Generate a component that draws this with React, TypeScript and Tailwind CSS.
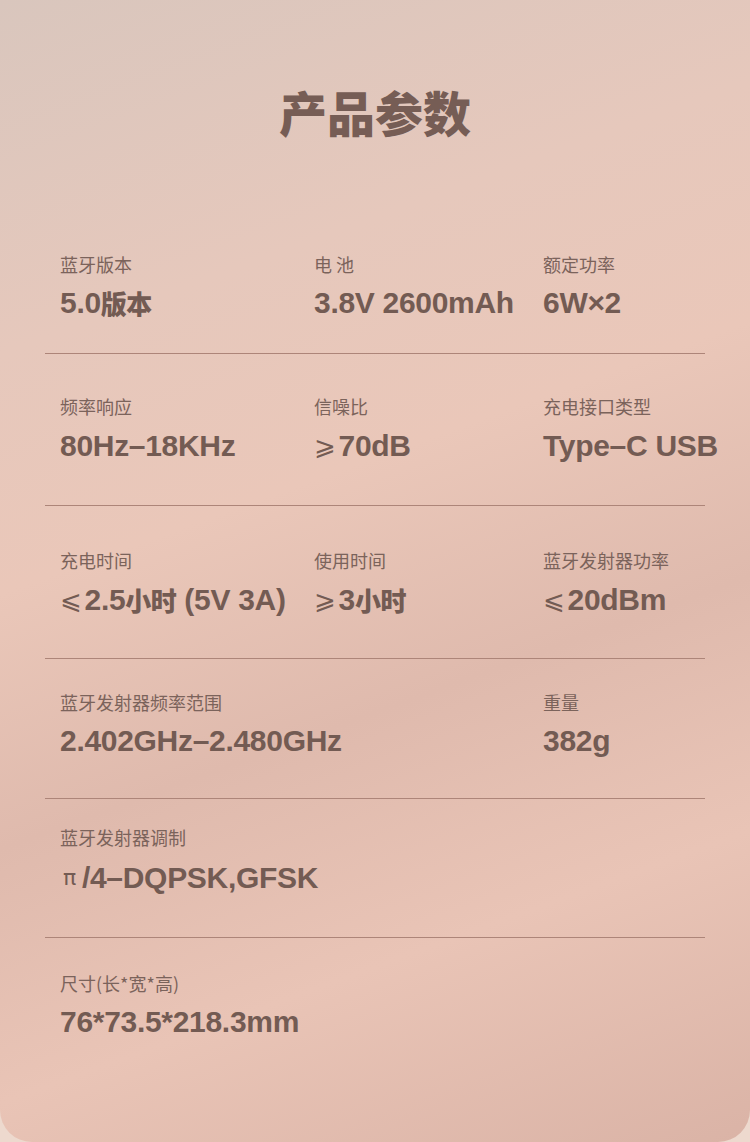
import React from "react";

type Cell = { label: string; value: React.ReactNode };

const Ge = () => (
  <span className="font-['DejaVu_Sans','Noto_Sans_CJK_SC',sans-serif] font-normal text-[26px] mr-[3px]">⩾</span>
);
const Le = () => (
  <span className="font-['DejaVu_Sans','Noto_Sans_CJK_SC',sans-serif] font-normal text-[26px] mr-[3px]">⩽</span>
);
const Zh = ({ children }: { children: React.ReactNode }) => (
  <span className="font-['Noto_Sans_CJK_SC',sans-serif] text-[26px] font-black tracking-[-0.5px]">{children}</span>
);

const rows: { cells: Cell[]; cls: string; gap: string; divider: boolean }[] = [
  {
    cls: "pt-[120px] pb-[35px]",
    gap: "mt-[15px]",
    divider: true,
    cells: [
      { label: "蓝牙版本", value: (<>5.0<Zh>版本</Zh></>) },
      { label: "电 池", value: "3.8V 2600mAh" },
      { label: "额定功率", value: "6W×2" },
    ],
  },
  {
    cls: "pt-[43px] pb-[44px]",
    gap: "mt-[16px]",
    divider: true,
    cells: [
      { label: "频率响应", value: "80Hz–18KHz" },
      { label: "信噪比", value: (<><Ge />70dB</>) },
      { label: "充电接口类型", value: "Type–C USB" },
    ],
  },
  {
    cls: "pt-[45px] pb-[43px]",
    gap: "mt-[16px]",
    divider: true,
    cells: [
      { label: "充电时间", value: (<><Le />2.5<Zh>小时</Zh>&nbsp;(5V 3A)</>) },
      { label: "使用时间", value: (<><Ge />3<Zh>小时</Zh></>) },
      { label: "蓝牙发射器功率", value: (<><Le />20dBm</>) },
    ],
  },
  {
    cls: "pt-[34px] pb-[42px]",
    gap: "mt-[15px]",
    divider: true,
    cells: [
      { label: "蓝牙发射器频率范围", value: "2.402GHz–2.480GHz" },
      { label: "", value: "" },
      { label: "重量", value: "382g" },
    ],
  },
  {
    cls: "pt-[29px] pb-[44px]",
    gap: "mt-[17px]",
    divider: true,
    cells: [
      {
        label: "蓝牙发射器调制",
        value: (
          <>
            <span className="font-['DejaVu_Sans',sans-serif] font-normal text-[22px] ml-[3px] mr-[6px]">π</span>/4–DQPSK,GFSK
          </>
        ),
      },
    ],
  },
  {
    cls: "pt-[36px] pb-[0px]",
    gap: "mt-[15px]",
    divider: false,
    cells: [{ label: "尺寸(长*宽*高)", value: "76*73.5*218.3mm" }],
  },
];

export default function App() {
  return (
    <div className="w-[750px] h-[1142px] bg-[#edd9ce] overflow-hidden">
      <div className="w-full h-full rounded-b-[32px] bg-[linear-gradient(160deg,#d9c6bd_0%,#e6c8bc_25%,#eac7b9_42%,#dfbaad_60%,#e9c4b6_78%,#dab3a6_100%)] flex flex-col">
        <h1 className="mt-[87px] text-center font-['Noto_Sans_CJK_SC',sans-serif] text-[48px] leading-[48px] font-black text-[#765d55]">
          产品参数
        </h1>
        <div className="mx-[45px] flex flex-col">
          {rows.map((r, i) => (
            <div key={i}>
              <div className={`${r.cls} pl-[15px] grid grid-cols-[254px_229px_1fr]`}>
                {r.cells.map((c, j) => (
                  <div key={j} className="flex flex-col whitespace-nowrap">
                    <div className="font-['Noto_Sans_CJK_SC',sans-serif] text-[18px] leading-[18px] text-[#7b635b]">
                      {c.label}
                    </div>
                    <div
                      className={`${r.gap} font-['Liberation_Sans',Arial,'Noto_Sans_CJK_SC',sans-serif] text-[30px] leading-[30px] font-bold tracking-[-0.3px] text-[#735b53] flex items-center`}
                    >
                      {c.value}
                    </div>
                  </div>
                ))}
              </div>
              {r.divider && <div className="h-px bg-[#ad8579]" />}
            </div>
          ))}
        </div>
      </div>
    </div>
  );
}
